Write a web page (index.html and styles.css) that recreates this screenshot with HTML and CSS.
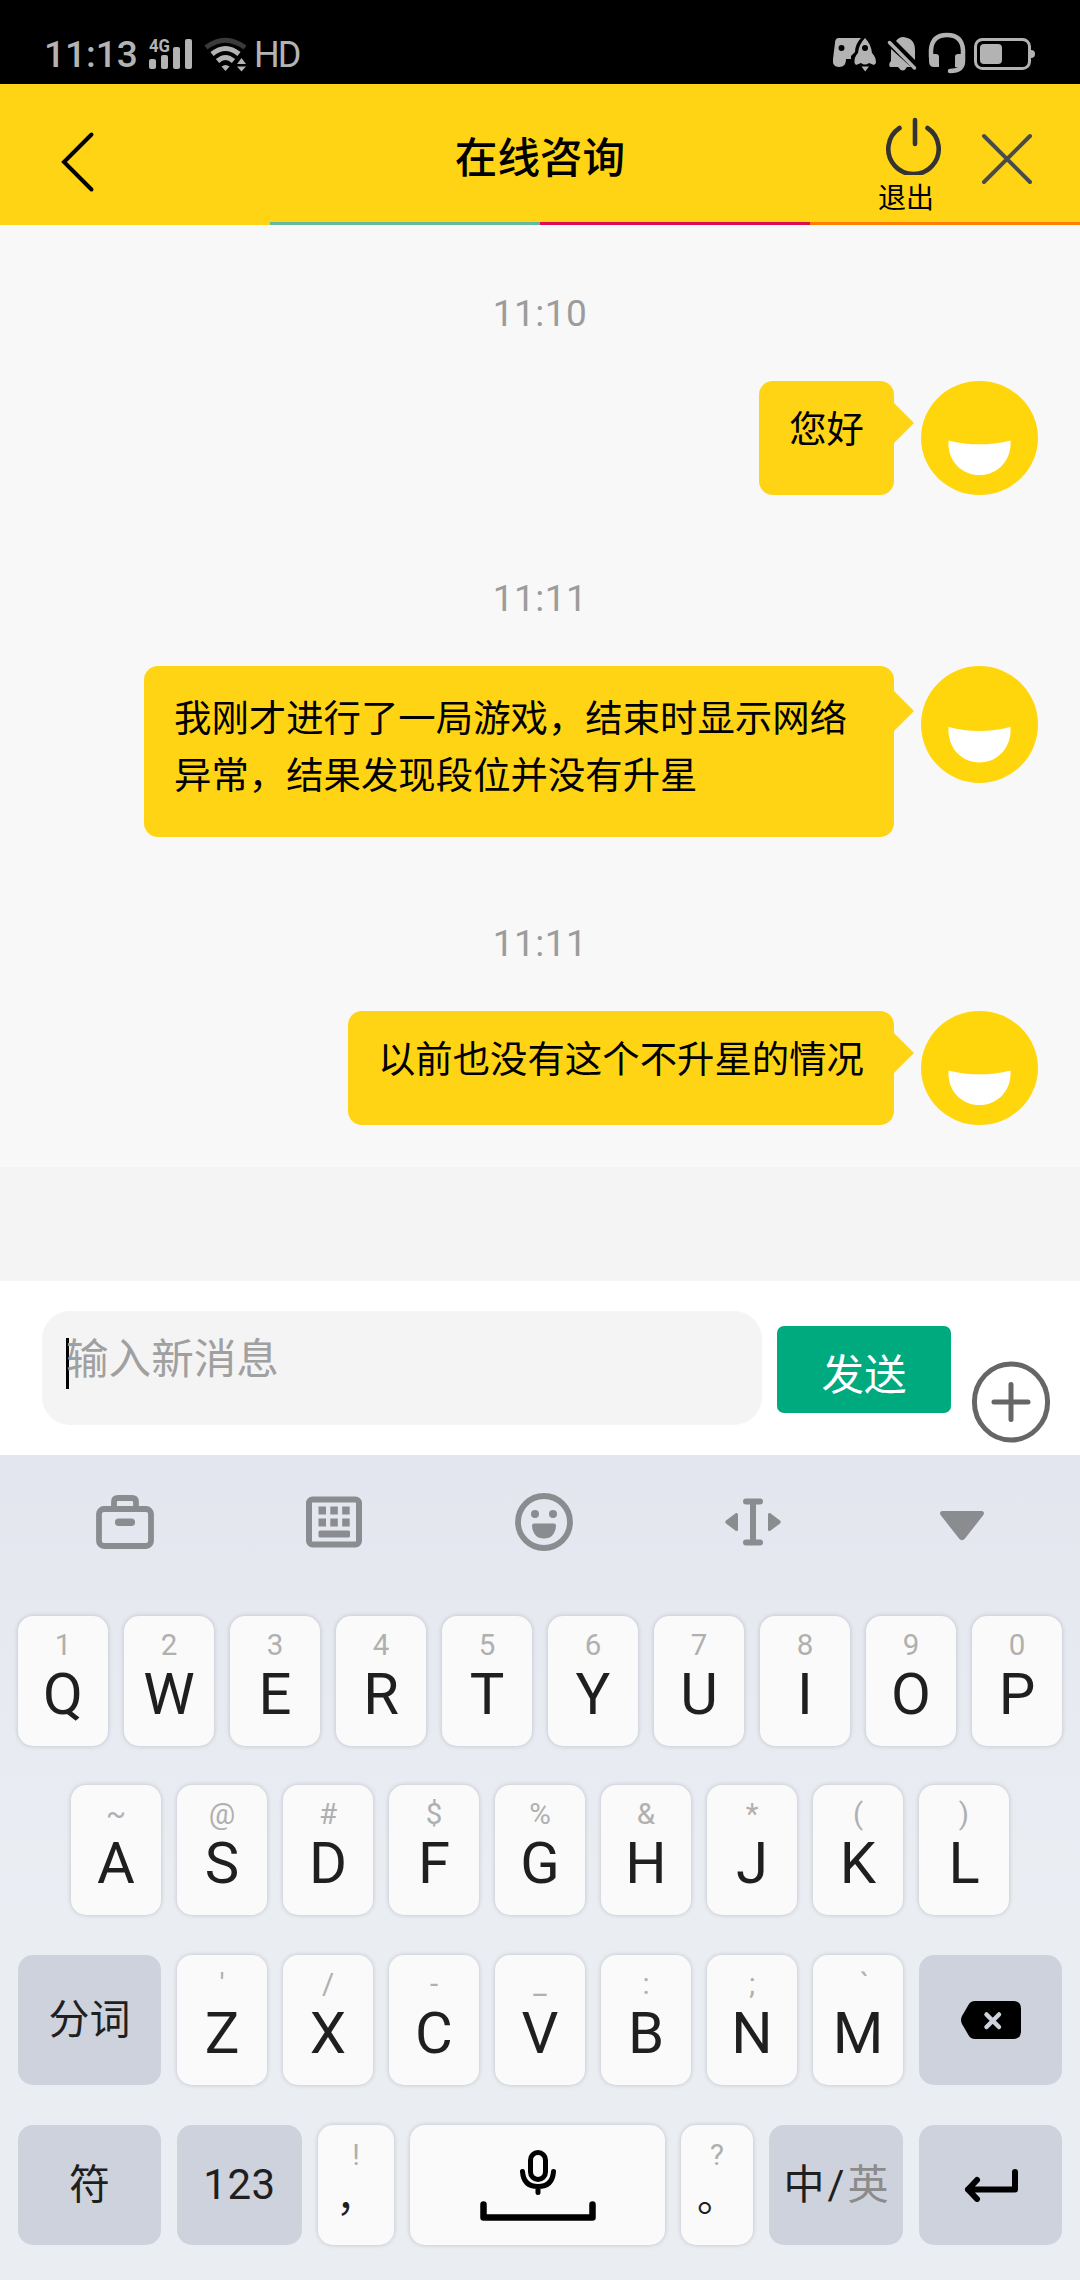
FILE: index.html
```html
<!DOCTYPE html>
<html lang="zh-CN">
<head>
<meta charset="utf-8">
<title>在线咨询</title>
<link rel="stylesheet" href="styles.css">
</head>
<body>
<div class="status">
  <span class="clock">11:13</span>
  <svg class="signal" width="44" height="34" viewBox="0 0 44 34" fill="#b3b3b3">
    <text class="net" x="0" y="14.5" textLength="21" lengthAdjust="spacingAndGlyphs">4G</text>
    <rect x="0" y="22" width="7" height="10" rx="2"/><rect x="12" y="18" width="7" height="14" rx="2"/><rect x="24" y="10" width="7" height="22" rx="2"/><rect x="36" y="2" width="7" height="30" rx="2"/>
  </svg>
  <svg class="wifi" width="44" height="36" viewBox="0 0 44 36" fill="none" stroke-width="5">
    <path d="M2 11.5Q21 -3 41 11.5" stroke="#3a3a3a"/>
    <path d="M8 18Q21.500 7 35 18M13.500 25Q21.500 18 29.500 25" stroke="#b3b3b3"/>
    <path d="M17.500 30.500Q21.500 27.500 25.500 30.500L21.500 35ZM37.500 22L42 28H33ZM33 30.500H42L37.500 35.500Z" fill="#b3b3b3"/>
  </svg>
  <span class="hd">HD</span>
  <svg class="tray" width="206" height="46" viewBox="0 0 206 46" fill="#b3b3b3">
    <path fill-rule="evenodd" d="M7 8H29C25 12 23 17 23 22L19 26V29H14C14 34 12 37 7 37Q0 37 1 29L3 13Q3 8 7 8ZM9.500 15A3 3 0 1 0 9.500 21A3 3 0 1 0 9.500 15Z"/>
    <path fill-rule="evenodd" d="M33 8Q39 14 40 23Q44 27 44 33L42 35L37 33Q33 36 29 33L24 35L22.500 33Q22 27 26 23Q27 14 33 8ZM33 15A3 3 0 1 0 33 21A3 3 0 1 0 33 15Z"/>
    <path d="M29.500 36.500H37L33.200 41.500Z"/>
    <path d="M64 11Q67 7 71 7Q83 8 83 20V30ZM59 19L79 37H75Q71 44 66 37H58Q56 34 59 31Z"/>
    <path d="M57.500 12.500L82.500 38" fill="none" stroke="#b3b3b3" stroke-width="3.500" stroke-linecap="round"/>
    <path d="M99 27V20Q100 5 115 5Q130 5 131 20V31Q131 41 118 41" fill="none" stroke="#b3b3b3" stroke-width="4.500" stroke-linecap="round"/>
    <path d="M97 24H104Q107 24 107 27V37H102Q97 37 97 31ZM133 24H126Q123 24 123 27V37H130Z"/>
    <rect x="143.500" y="9.500" width="54" height="29" rx="7" fill="none" stroke="#b3b3b3" stroke-width="3"/>
    <rect x="148" y="14" width="22" height="20" rx="4"/><path d="M199 20Q203 20 203 24Q203 28 199 28Z"/>
  </svg>
</div>

<header class="header">
  <svg class="back" width="36" height="62" viewBox="0 0 36 62" fill="none" stroke="#000" stroke-width="4" stroke-linecap="round"><path d="M31.500 3.500L4 31L31.500 58.500"/></svg>
  <h1 class="title">在线咨询</h1>
  <div class="actions">
    <div class="exit">
      <svg width="60" height="58" viewBox="0 0 60 58" fill="none" stroke="#333" stroke-width="4.600" stroke-linecap="round"><path d="M15.500 11A25.200 25.200 0 1 0 43.500 11M31 3V27"/></svg>
      <span class="exit-label">退出</span>
    </div>
    <svg class="close" width="54" height="54" viewBox="0 0 54 54" fill="none" stroke="#484b4c" stroke-width="4" stroke-linecap="round"><path d="M4 4L50 50M50 4L4 50"/></svg>
  </div>
</header>
<div class="stripe"><i></i><i class="teal"></i><i class="red"></i><i class="orange"></i></div>

<svg class="defs" width="0" height="0"><symbol id="face" viewBox="0 0 117 117" preserveAspectRatio="none"><circle cx="58.500" cy="58.500" r="58.500" fill="#ffd60c"/><path d="M27.500 61Q58.500 69 89.500 61C91 82 76 96.500 58.500 96.500S26 82 27.500 61Z" fill="#fff"/></symbol></svg>
<main class="chat">
  <time class="time">11:10</time>
  <div class="message"><p class="bubble">您好</p><svg class="avatar"><use href="#face"/></svg></div>
  <time class="time">11:11</time>
  <div class="message message-long"><p class="bubble">我刚才进行了一局游戏，结束时显示网络异常，结果发现段位并没有升星</p><svg class="avatar"><use href="#face"/></svg></div>
  <time class="time">11:11</time>
  <div class="message"><p class="bubble">以前也没有这个不升星的情况</p><svg class="avatar"><use href="#face"/></svg></div>
</main>
<div class="spacer"></div>

<div class="composer">
  <div class="field"><i class="caret"></i><span>输入新消息</span></div>
  <button class="send">发送</button>
  <svg class="more" width="80" height="82" viewBox="0 0 80 82" fill="none" stroke="#666" stroke-width="5"><ellipse cx="40" cy="41" rx="36.600" ry="38"/><path d="M23 41H57M40 23.500V58.500" stroke-linecap="round"/></svg>
</div>

<section class="keyboard">
  <div class="tools">
    <svg viewBox="0 0 60 60"><g fill="none" stroke="#8b8c90" stroke-width="5.800"><rect x="4" y="17" width="52" height="37" rx="5"/><path d="M19 17V10Q19 6 23 6H37Q41 6 41 10V17"/></g><rect x="20" y="26.500" width="20" height="7.500" rx="3.500"/></svg>
    <svg viewBox="0 0 60 60"><rect x="5" y="7.500" width="50" height="45" rx="3.500" fill="none" stroke="#8b8c90" stroke-width="6"/><path d="M14.500 14.500h7.500v8h-7.500zM26.300 14.500h7.500v8h-7.500zM38.200 14.500h7.500v8h-7.500zM14.500 26.500h7.500v8h-7.500zM26.300 26.500h7.500v8h-7.500zM38.200 26.500h7.500v8h-7.500z"/><rect x="14.500" y="38.500" width="31.500" height="7" rx="1.500"/></svg>
    <svg viewBox="0 0 60 60"><circle cx="30" cy="30" r="26" fill="none" stroke="#8b8c90" stroke-width="5.800"/><circle cx="21" cy="22" r="4"/><circle cx="39" cy="22" r="4"/><path d="M20 31.500H40Q42 31.500 42 33.500Q41 46.500 30 46.500T18 33.500Q18 31.500 20 31.500Z"/></svg>
    <svg viewBox="0 0 60 60"><path d="M23 9.500H37M23 50.500H37M30 9.500V50.500" fill="none" stroke="#8b8c90" stroke-width="6" stroke-linecap="round"/><path d="M13 21L3 28.500Q1.500 30 3 31.500L13 39Q15 39.500 15 37.500V22.500Q15 20.500 13 21ZM47 21L57 28.500Q58.500 30 57 31.500L47 39Q45 39.500 45 37.500V22.500Q45 20.500 47 21Z"/></svg>
    <svg viewBox="0 0 60 60"><path d="M10 19H50Q53.500 20 51 23.500L33 46.500Q30 50 27 46.500L9 23.500Q6.500 20 10 19Z"/></svg>
  </div>
  <div class="row">
    <div class="key"><small>1</small><b>Q</b></div><div class="key"><small>2</small><b>W</b></div><div class="key"><small>3</small><b>E</b></div><div class="key"><small>4</small><b>R</b></div><div class="key"><small>5</small><b>T</b></div><div class="key"><small>6</small><b>Y</b></div><div class="key"><small>7</small><b>U</b></div><div class="key"><small>8</small><b>I</b></div><div class="key"><small>9</small><b>O</b></div><div class="key"><small>0</small><b>P</b></div>
  </div>
  <div class="row">
    <div class="key"><small>~</small><b>A</b></div><div class="key"><small>@</small><b>S</b></div><div class="key"><small>#</small><b>D</b></div><div class="key"><small>$</small><b>F</b></div><div class="key"><small>%</small><b>G</b></div><div class="key"><small>&amp;</small><b>H</b></div><div class="key"><small>*</small><b>J</b></div><div class="key"><small>(</small><b>K</b></div><div class="key"><small>)</small><b>L</b></div>
  </div>
  <div class="row">
    <div class="key dark wide">分词</div><div class="key"><small>'</small><b>Z</b></div><div class="key"><small>/</small><b>X</b></div><div class="key"><small>-</small><b>C</b></div><div class="key"><small>_</small><b>V</b></div><div class="key"><small>:</small><b>B</b></div><div class="key"><small>;</small><b>N</b></div><div class="key"><small class="grave">`</small><b>M</b></div>
    <div class="key dark wide"><svg width="62" height="40" viewBox="0 0 62 40"><path d="M15 1H53Q61 1 61 9V31Q61 39 53 39H15Q11 39 9 36L2 24Q0 20 2 16L9 4Q11 1 15 1Z"/><path d="M26.500 14.500L39 27M39 14.500L26.500 27" stroke="#ced2dc" stroke-width="4.500" stroke-linecap="round"/></svg></div>
  </div>
  <div class="row row-bottom">
    <div class="key dark wide">符</div><div class="key dark digits">123</div><div class="key comma"><small>!</small><b>，</b></div>
    <div class="key space"><svg width="118" height="72" viewBox="0 0 118 72" fill="none" stroke="#000" stroke-linecap="round"><rect x="51.500" y="3.500" width="15" height="27" rx="7.500" stroke-width="5"/><path d="M43.500 22.500Q44.500 37.500 59 37.500T74.500 22.500M59 38.500V43.500" stroke-width="5"/><path d="M4.500 55.500V68.500H113.500V55.500" stroke-width="6.500" stroke-linejoin="round"/></svg></div>
    <div class="key stop"><small>?</small><b>。</b></div><div class="key dark lang"><span>中</span><span class="slash">/</span><span class="inactive">英</span></div>
    <div class="key dark wide"><svg width="56" height="34" viewBox="0 0 56 34" fill="none" stroke="#000" stroke-width="6" stroke-linecap="round" stroke-linejoin="round"><path d="M52 4V21.500H5M14 12L5 21.500L14 31"/></svg></div>
  </div>
</section>
</body>
</html>
```
FILE: styles.css
```css
* { box-sizing: border-box; }
body {
  margin: 0;
  width: 1080px;
  height: 2280px;
  overflow: hidden;
  display: flex;
  flex-direction: column;
  background: #f4f4f4;
  font-family: Roboto, "Noto Sans CJK SC", sans-serif;
}
svg { display: block; flex: none; }
.defs { position: absolute; }

/* Status bar */
.status {
  flex: none;
  height: 84px;
  padding-right: 42px;
  display: flex;
  align-items: flex-start;
  background: #000;
  color: #b3b3b3;
}
.clock { width: 105px; margin: 35px 0 0 44px; font-size: 37px; font-weight: 500; line-height: 40px; }
.signal { margin-top: 37px; }
.net { font-size: 18px; font-weight: 700; }
.wifi { margin: 36px 0 0 11px; }
.hd { margin: 35px 0 0 6px; font-size: 36px; line-height: 40px; letter-spacing: -2px; }
.tray { margin: 30px 0 0 auto; }

/* Header */
.header {
  flex: none;
  height: 138px;
  display: grid;
  grid-template-columns: 1fr auto 1fr;
  align-items: start;
  background: #ffd414;
}
.back { margin: 47px 0 0 60px; }
.title { margin: 43px 0 0; font-size: 42.600px; font-weight: 500; line-height: 62px; }
.actions { display: flex; justify-content: flex-end; padding-right: 46px; }
.exit { width: 60px; margin: 33px 36px 0 0; }
.exit-label { display: block; margin: 4px 0 0 -6px; font-size: 28px; line-height: 40px; white-space: nowrap; }
.exit { display: flex; flex-direction: column; }
.close { margin-top: 48px; }
.stripe { flex: none; display: grid; grid-template-columns: repeat(4, 1fr); height: 3px; background: #ffd414; }
.teal { background: #64b9a0; }
.red { background: #de0c50; }
.orange { background: #ff7d00; }

/* Conversation */
.chat { flex: none; height: 942px; background: #f8f8f8; }
.time {
  display: block;
  padding-top: 69px;
  height: 156px;
  text-align: center;
  font-size: 37px;
  line-height: 40px;
  letter-spacing: 0.500px;
  color: #9c9c9c;
}
.message { display: flex; justify-content: flex-end; padding-right: 42px; gap: 27px; height: 114px; margin-bottom: 15px; }
.bubble {
  position: relative;
  max-width: 750px;
  margin: 0;
  padding: 21px 30px 0;
  border-radius: 14px;
  background: #ffd414;
  color: #000;
  font-size: 37.400px;
  line-height: 57px;
}
.bubble::after {
  content: "";
  position: absolute;
  left: 100%;
  top: 22px;
  border: 20.500px solid transparent;
  border-left-color: #ffd414;
  border-right-width: 0;
}
.message-long { height: 171px; margin-bottom: 18px; }
.message-long .bubble { padding-top: 25px; }
.message-long .bubble::after { top: 25px; }
.avatar { width: 117px; height: 114px; }
.message-long .avatar { height: 117px; }
.spacer { flex: none; height: 114px; background: #f4f4f4; }

/* Composer */
.composer { flex: none; height: 174px; display: flex; align-items: flex-start; padding: 30px 29px 0 42px; background: #fff; }
.field { width: 720px; height: 114px; padding: 27px 24px; display: flex; border-radius: 28px; background: #f4f4f4; color: #a0a0a0; font-size: 42.600px; line-height: 42px; }
.caret { width: 3px; height: 51px; margin-right: -3px; background: #000; }
.send { width: 174px; height: 87px; margin: 15px 0 0 15px; padding: 11px 0 0; border: 0; border-radius: 7px; background: #00aa7f; color: #fff; font: 42.600px/62px Roboto, "Noto Sans CJK SC", sans-serif; }
.more { margin: 50px 0 0 20px; }

/* Keyboard */
.keyboard { flex: none; height: 825px; background: linear-gradient(#e3e6ee, #e6e9f0 20%, #eaedf2 55%, #eaedf2); }
.tools { height: 161px; padding: 37px 88px 0 95px; display: flex; justify-content: space-between; }
.tools svg { width: 60px; height: 60px; fill: #8b8c90; }
.row { display: flex; justify-content: center; gap: 16px; height: 130px; margin-bottom: 39px; }
.row + .row + .row { margin-bottom: 40px; margin-top: 40px; }
.row-bottom.row-bottom { height: 120px; margin-top: 0 !important; }
.key {
  width: 90px;
  padding-top: 14px;
  border-radius: 15px;
  background: #fafafa;
  box-shadow: 0 0 4px rgba(60, 65, 80, 0.25);
  color: #1f1f1f;
  text-align: center;
}
.key small { display: block; font-size: 29.500px; line-height: 30px; color: #b0b0b0; }
.key b { display: block; margin-top: 4px; font-size: 58px; font-weight: 400; line-height: 60px; }
.key .grave { padding-left: 13px; }
.key.dark { display: flex; align-items: center; justify-content: center; padding: 0; background: #ced2dc; box-shadow: none; font-size: 41px; line-height: 60px; }
.key.wide { width: 143px; }
.row .digits { width: 125px; font-size: 42px; letter-spacing: 0.500px; }
.key.comma { width: 76px; padding-top: 15px; }
.key.stop { width: 72px; padding-top: 15px; }
.comma b, .stop b { font-family: "Noto Sans CJK SC", sans-serif; font-size: 40px; line-height: 40px; }
.key.space { width: 255px; padding-top: 24px; }
.space svg { margin: 0 auto; }
.row .lang { width: 134px; }
.slash { padding: 0 3px; }
.inactive { color: #8b8b8b; }
```
